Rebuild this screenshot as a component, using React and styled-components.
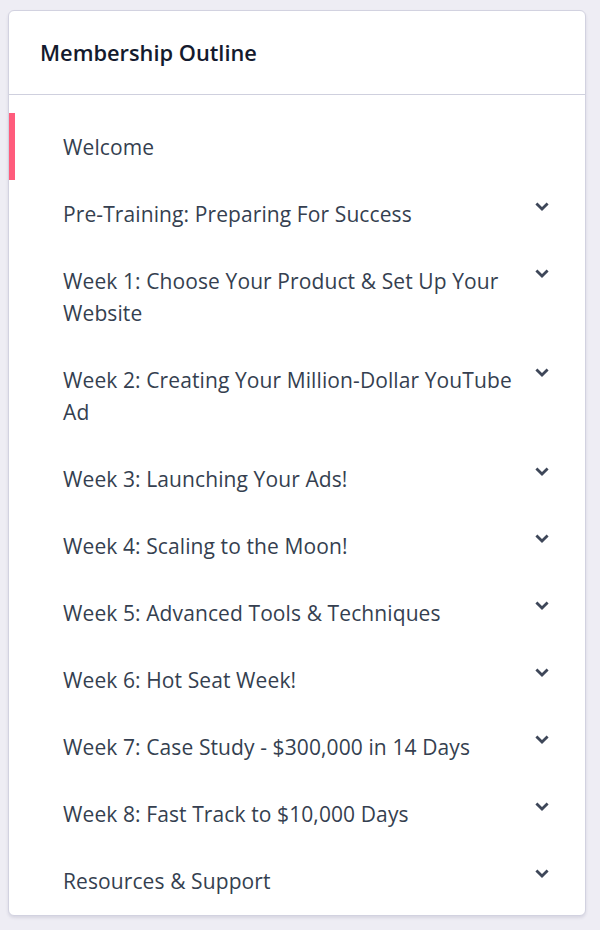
import React from "react";
import styled, { createGlobalStyle } from "styled-components";

const Global = createGlobalStyle`
  html, body { margin: 0; padding: 0; background: #eeedf4; }
  body { font-family: "Open Sans", Lato, sans-serif; -webkit-font-smoothing: antialiased; }
`;

const Page = styled.div`
  padding: 10px 14px 15px 8px;
`;

const Card = styled.section`
  background: #fff;
  border: 1px solid #d2d2e0;
  border-radius: 6px;
  box-shadow: 0 2px 3px rgba(60, 60, 100, 0.12);
  overflow: hidden;
`;

const Header = styled.header`
  height: 83px;
  display: flex;
  align-items: center;
  padding: 0 31px;
  border-bottom: 1px solid #cfd0de;
`;

const Title = styled.h2`
  margin: 0;
  font-size: 21.8px;
  font-weight: 600;
  color: #141a2e;
`;

const List = styled.ul`
  list-style: none;
  margin: 0;
  padding: 18px 0 1px;
`;

const Item = styled.li`
  position: relative;
  display: flex;
  align-items: flex-start;
  justify-content: space-between;
  padding: 18px 36px 17px 54px;
  &::before {
    content: "";
    position: absolute;
    left: 0;
    top: 0;
    bottom: 0;
    width: 6px;
    background: ${(p) => (p.$active ? "#ff5c7c" : "transparent")};
  }
`;

const Label = styled.span`
  font-size: 21px;
  letter-spacing: 0.1px;
  line-height: 32px;
  color: #353f50;
  max-width: 455px;
`;

const Chevron = styled.span`
  flex: none;
  display: flex;
  margin-top: 4px;
  color: #3e4759;
`;

const ChevronIcon = () => (
  <svg width="14" height="9" viewBox="0 0 14 9" aria-hidden="true">
    <path d="M1.4 1.4 L7 7 L12.6 1.4" fill="none" stroke="currentColor" strokeWidth="2.8" strokeLinecap="butt" strokeLinejoin="miter" />
  </svg>
);

const items = [
  { label: "Welcome", active: true, chevron: false },
  { label: "Pre-Training: Preparing For Success" },
  { label: "Week 1: Choose Your Product & Set Up Your Website" },
  { label: "Week 2: Creating Your Million-Dollar YouTube Ad" },
  { label: "Week 3: Launching Your Ads!" },
  { label: "Week 4: Scaling to the Moon!" },
  { label: "Week 5: Advanced Tools & Techniques" },
  { label: "Week 6: Hot Seat Week!" },
  { label: "Week 7: Case Study - $300,000 in 14 Days" },
  { label: "Week 8: Fast Track to $10,000 Days" },
  { label: "Resources & Support" },
];

export default function App() {
  return (
    <>
      <Global />
      <Page>
        <Card>
          <Header>
            <Title>Membership Outline</Title>
          </Header>
          <List>
            {items.map((it) => (
              <Item key={it.label} $active={it.active}>
                <Label>{it.label}</Label>
                {it.chevron !== false && (
                  <Chevron>
                    <ChevronIcon />
                  </Chevron>
                )}
              </Item>
            ))}
          </List>
        </Card>
      </Page>
    </>
  );
}
